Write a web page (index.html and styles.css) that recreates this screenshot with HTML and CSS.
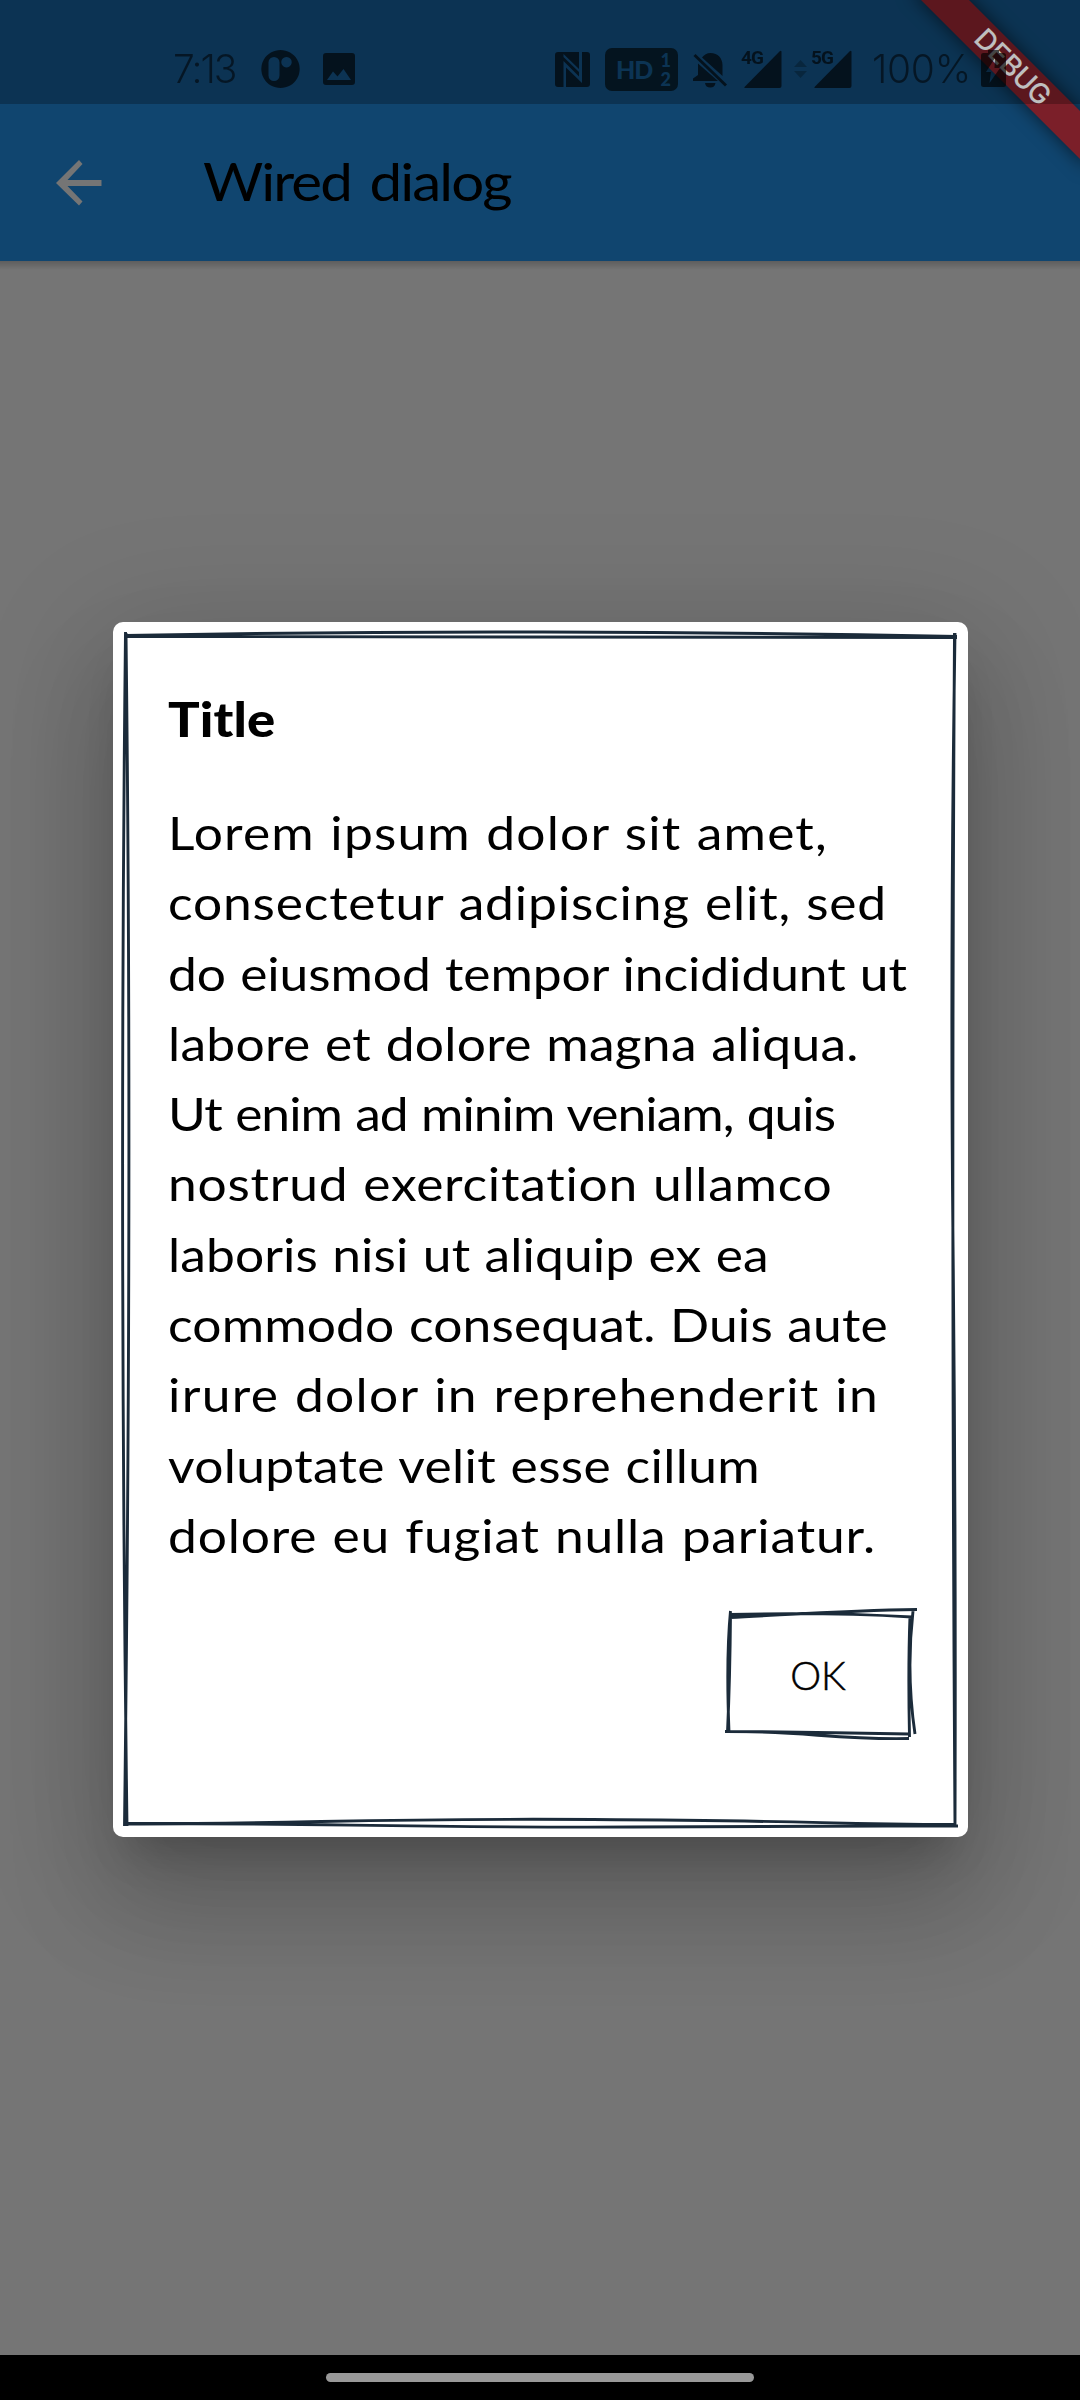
FILE: index.html
```html
<!DOCTYPE html>
<html lang="en">
<head>
<meta charset="utf-8">
<title>Wired dialog</title>
<link rel="stylesheet" href="styles.css">
</head>
<body>
<header class="header">
  <div class="status">
    <span class="clock">7:13</span>
    <svg class="i-app" width="39" height="38" viewBox="0 0 39 38"><path fill-rule="evenodd" d="M19.500 0a19.200 19 0 1 0 .01 0zM13 7a5.500 5.500 0 0 1 5.500 5.500v13a5.500 5.500 0 0 1-11 0v-13A5.500 5.500 0 0 1 13 7zM25.500 7a5.200 5.200 0 1 1-.01 0z"/></svg>
    <svg class="i-image" width="32" height="32" viewBox="0 0 32 32"><path fill-rule="evenodd" d="M3 0h26a3 3 0 0 1 3 3v26a3 3 0 0 1-3 3H3a3 3 0 0 1-3-3V3a3 3 0 0 1 3-3zM4 27h24l-7.500-11-6 7.500-4.500-5z"/></svg>
    <svg class="i-nfc" width="35" height="35" viewBox="0 0 35 35"><path fill-rule="evenodd" d="M3 0h21v24.500L8.500 9v26H3a3 3 0 0 1-3-3V3a3 3 0 0 1 3-3zM27 0h5a3 3 0 0 1 3 3v29a3 3 0 0 1-3 3H11V15.500l16 15.500zM8.500 2v3L24 20v-3z"/></svg>
    <span class="hd"><b>HD</b><span class="sims"><i>1</i><i>2</i></span></span>
    <svg class="i-bell" width="35" height="35" viewBox="0 0 35 35"><path d="M9 4.500C11 2 14 0 17.500 0 25 0 29.500 5.500 29.500 12v11zM5 10.500 25 28H0v-2.500L5 22zM12 30h10.500a5.300 5.300 0 0 1-10.500 0z"/><path d="M1.500 2 33 32.500" fill="none" stroke="#000" stroke-width="3"/></svg>
    <svg class="i-4g" width="41" height="48" viewBox="0 -8 41 48"><path d="M38.500 1.500Q40.500 0 40.500 2v34q0 2-2 2H4.500q-2 0-.5-1.600z"/><text x="0" y="14" textLength="23">4G</text></svg>
    <svg class="i-updown" width="13" height="18" viewBox="0 0 13 18"><path d="M6.500 0 13 7H0zM6.500 18 0 11h13z"/></svg>
    <svg class="i-5g" width="41" height="48" viewBox="0 -8 41 48"><path d="M38.500 1.500Q40.500 0 40.500 2v34q0 2-2 2H4.500q-2 0-.5-1.600z"/><text x="0" y="14" textLength="23">5G</text></svg>
    <span class="percent">100%</span>
    <svg class="i-battery" width="25" height="38" viewBox="0 0 25 38"><path fill-rule="evenodd" d="M7 0h11v3h4.500a2.500 2.500 0 0 1 2.500 2.500v29a2.500 2.500 0 0 1-2.500 2.500h-20A2.500 2.500 0 0 1 0 34.500v-29A2.500 2.500 0 0 1 2.500 3H7zM14 8 5 22h5L8.500 33 19 18h-5.500z"/></svg>
  </div>
  <div class="appbar">
    <svg class="back" width="46" height="46" viewBox="0 0 46 46"><path d="M45.500 20v6H11.500L26.500 41.500 23 45.500 0 23 23 0l3.500 4L11.500 20z"/></svg>
    <h1>Wired dialog</h1>
  </div>
  <svg class="banner" width="200" height="220" viewBox="0 0 200 220">
    <path class="ribbon" d="M31 -10 210 169V121L79 -10z"/>
    <text transform="translate(92.500 40.500) rotate(45)" textLength="95">DEBUG</text>
  </svg>
</header>
<main class="page">
  <section class="dialog">
    <svg class="sketch" width="855" height="1215" viewBox="0 0 855 1215">
      <path d="M12 14.500Q430 14 844 15.500M13 13.500Q220 9.500 430 10T844 14.500M12.500 10Q6 600 14 1204M13 11Q19.500 560 11.500 1204M841.500 11Q838 600 842 1204M842 11Q837 330 840 620T842 1202M11 1201.500C200 1202 240 1196 480 1197.500S700 1202 843 1202.500M11 1202C200 1200 260 1206 520 1205S740 1204 845 1204"/>
    </svg>
    <h2>Title</h2>
    <p class="body">
      <span>Lorem ipsum dolor sit amet,</span>
      <span>consectetur adipiscing elit, sed</span>
      <span>do eiusmod tempor incididunt ut</span>
      <span>labore et dolore magna aliqua.</span>
      <span>Ut enim ad minim veniam, quis</span>
      <span>nostrud exercitation ullamco</span>
      <span>laboris nisi ut aliquip ex ea</span>
      <span>commodo consequat. Duis aute</span>
      <span>irure dolor in reprehenderit in</span>
      <span>voluptate velit esse cillum</span>
      <span>dolore eu fugiat nulla pariatur.</span>
    </p>
    <button class="ok" type="button">
      <svg class="sketch" width="194" height="134" viewBox="0 0 194 134">
        <path d="M5 9.500C60 7 120 2.500 192 1.500M5 6.500Q100 4 187 9M5.500 3Q1 50 4 124M5.500 6Q5 70 2.500 124M188 3Q181 65 190 126M185 8Q183 60 184.500 129M0 123.500C80 123 110 132 184 130.500M1 123.500Q90 124 184 126"/>
      </svg>
      OK
    </button>
  </section>
</main>
<footer class="nav"><span class="pill"></span></footer>
</body>
</html>
```
FILE: styles.css
```css
* { box-sizing: border-box; }
body {
  margin: 0;
  height: 2400px;
  display: flex;
  flex-direction: column;
  background: #757575;
  font-family: Lato, sans-serif;
  color: #000;
}
svg { display: block; flex: none; }
h1, h2, p { margin: 0; font-weight: 400; }

.header {
  position: relative;
  height: 261px;
  background: #10456f;
  overflow: hidden;
  flex: none;
}
.status {
  position: relative;
  z-index: 2;
  height: 104px;
  padding-left: 173px;
  display: flex;
  align-items: flex-start;
  background: rgba(0, 0, 0, .25);
}
.status svg { opacity: .64; }
.status text { font: 700 19px Roboto, sans-serif; }
.clock, .percent {
  margin-top: 45px;
  font: 300 39px/48px Inter, sans-serif;
  white-space: nowrap;
  opacity: .55;
}
.clock { width: 65px; letter-spacing: -2px; }
.percent { width: 99px; margin-left: 20px; letter-spacing: -.3px; }
.status .i-app { margin: 50px 0 0 23px; }
.status .i-image { margin: 53px 0 0 23px; }
.status .i-nfc { margin: 52px 0 0 200px; }
.hd {
  width: 73px;
  height: 43px;
  margin: 48px 0 0 15px;
  padding: 0 7px 0 11px;
  border-radius: 7px;
  background: #04141f;
  color: #0c3454;
  display: flex;
  align-items: center;
  justify-content: space-between;
}
.hd b { font: 900 25px/43px Lato, sans-serif; letter-spacing: -1px; }
.sims { display: flex; flex-direction: column; }
.sims i { font: 900 18px/19px Lato, sans-serif; }
.status .i-bell { margin: 53px 0 0 15px; }
.status .i-4g { margin: 42px 0 0 13px; }
.status .i-updown { margin: 60px 0 0 12px; opacity: .25; }
.status .i-5g { margin: 42px 0 0 4px; }
.status .i-battery { margin: 50px 0 0 10px; }

.appbar {
  height: 157px;
  padding-left: 56px;
  display: flex;
  align-items: center;
}
.back { fill: #757575; }
.appbar h1 {
  margin: 0 0 3px 101px;
  font-size: 52px;
  line-height: 70px;
  letter-spacing: -1.7px;
  word-spacing: 5px;
  white-space: nowrap;
  transform: scaleX(1.12);
  transform-origin: left;
}
.banner { position: absolute; top: 0; right: 0; z-index: 1; }
.ribbon { fill: #7b1f29; filter: drop-shadow(0 0 9px rgba(0, 0, 0, .6)); }
.banner text { font: 500 28px Inter, sans-serif; fill: #fff; }

.page {
  flex: 1;
  padding: 361px 112px 0 113px;
  background: linear-gradient(rgba(0, 0, 0, .2), transparent 9px);
}
.dialog {
  position: relative;
  height: 1215px;
  padding: 62px 50px 0 55px;
  display: flex;
  flex-direction: column;
  border-radius: 10px;
  background: #fff;
  box-shadow: 0 30px 41px -19px rgba(0, 0, 0, .2), 0 66px 104px 8px rgba(0, 0, 0, .14), 0 25px 126px 22px rgba(0, 0, 0, .12);
}
.sketch {
  position: absolute;
  top: 0;
  left: 0;
  fill: none;
  stroke: #1b2b3a;
  stroke-width: 2.9px;
}
.dialog h2 {
  height: 114px;
  font-size: 47px;
  line-height: 70px;
  font-weight: 900;
  letter-spacing: .1px;
  transform: scaleX(1.12);
  transform-origin: left;
}
.body {
  display: flex;
  flex-direction: column;
  font-size: 46px;
  line-height: 70.28px;
  word-spacing: 1px;
  white-space: nowrap;
  transform: scaleX(1.12);
  transform-origin: left;
}
.body span:nth-child(1) { letter-spacing: 1.04px; }
.body span:nth-child(2) { letter-spacing: .74px; }
.body span:nth-child(3) { letter-spacing: -.06px; }
.body span:nth-child(4) { letter-spacing: .25px; }
.body span:nth-child(5) { letter-spacing: -.88px; }
.body span:nth-child(6) { letter-spacing: .66px; }
.body span:nth-child(7) { letter-spacing: .08px; }
.body span:nth-child(8) { letter-spacing: .14px; }
.body span:nth-child(9) { letter-spacing: 1.17px; }
.body span:nth-child(10) { letter-spacing: .3px; }
.body span:nth-child(11) { letter-spacing: .74px; }
.ok {
  position: relative;
  align-self: flex-end;
  width: 194px;
  height: 134px;
  margin: 37px -1px 0 0;
  padding: 0 8px 0 0;
  border: 0;
  background: none;
  color: #000;
  font: 300 39px Lato, sans-serif;
  -webkit-text-stroke: .5px #000;
}

.nav {
  flex: none;
  height: 45px;
  display: flex;
  align-items: center;
  justify-content: center;
  background: #000;
}
.pill { width: 428px; height: 9px; border-radius: 5px; background: #999; }
```
